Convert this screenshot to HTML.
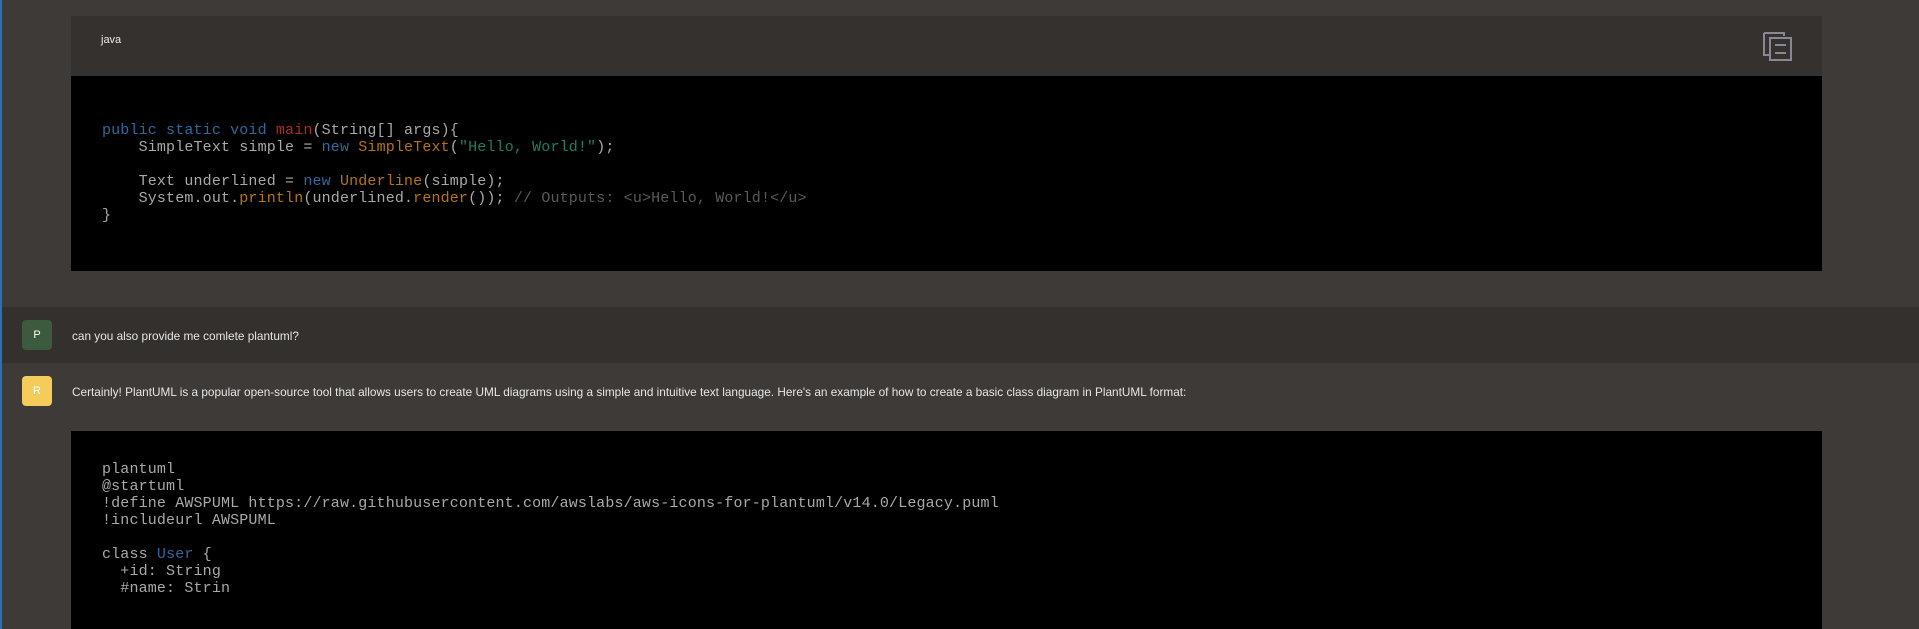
<!DOCTYPE html>
<html><head><meta charset="utf-8"><style>
html,body{margin:0;padding:0}
body{width:1919px;height:629px;background:#3e3a37;position:relative;overflow:hidden;font-family:"Liberation Sans",sans-serif}
.bl{position:absolute;left:0;top:0;width:2px;height:629px;background:#2a6fc4}
.hdr{position:absolute;left:71px;top:16px;width:1751px;height:60px;background:#35312e}
.hdr span{position:absolute;left:30px;top:18px;color:#e8e8e8;font-size:11px}
.code{position:absolute;left:71px;width:1751px;background:#000;font-family:"Liberation Mono",monospace;font-size:15px;line-height:17px;color:#a9a9a9;white-space:pre;letter-spacing:0.15px}
.code pre{margin:0;font:inherit;position:absolute;left:31px}
.k{color:#2d6a9c}.r{color:#b3262a}.o{color:#b8740f}.g{color:#17806a}.c{color:#5a5a5a}
.urow{position:absolute;left:2px;top:307px;width:1917px;height:56px;background:#33302d}
.av{position:absolute;left:22px;width:30px;height:30px;border-radius:4px;color:#fff;font-size:11px;text-align:center;line-height:30px}
.t{position:absolute;left:72px;color:#e6e6e6;font-size:11.8px}
</style></head><body>
<div class="bl"></div>
<div class="hdr"><span>java</span>
<svg style="position:absolute;left:1692px;top:16px" width="30" height="30" viewBox="0 0 30 30" fill="none" stroke="#8a8694" stroke-width="2"><path d="M1 1h20v3M1 1v22h5"/><rect x="7" y="6" width="21" height="22" fill="#35312e"/><path d="M12 13h11M12 21h11"/></svg>
</div>
<div class="code" style="top:76px;height:195px"><pre style="top:46px"><span class="k">public static void</span> <span class="r">main</span>(String[] args){
    SimpleText simple = <span class="k">new</span> <span class="o">SimpleText</span>(<span class="g">"Hello, World!"</span>);

    Text underlined = <span class="k">new</span> <span class="o">Underline</span>(simple);
    System.out.<span class="o">println</span>(underlined.<span class="o">render</span>()); <span class="c">// Outputs: &lt;u&gt;Hello, World!&lt;/u&gt;</span>
}</pre></div>
<div class="urow"></div>
<div class="av" style="top:320px;background:#3b5a3e">P</div>
<div class="t" style="top:329px">can you also provide me comlete plantuml?</div>
<div class="av" style="top:376px;background:#f5cc5a">R</div>
<div class="t" style="top:385px">Certainly! PlantUML is a popular open-source tool that allows users to create UML diagrams using a simple and intuitive text language. Here's an example of how to create a basic class diagram in PlantUML format:</div>
<div class="code" style="top:431px;height:198px"><pre style="top:30px">plantuml
@startuml
!define AWSPUML https://raw.githubusercontent.com/awslabs/aws-icons-for-plantuml/v14.0/Legacy.puml
!includeurl AWSPUML

class <span class="k">User</span> {
  +id: String
  #name: Strin</pre></div>
</body></html>
